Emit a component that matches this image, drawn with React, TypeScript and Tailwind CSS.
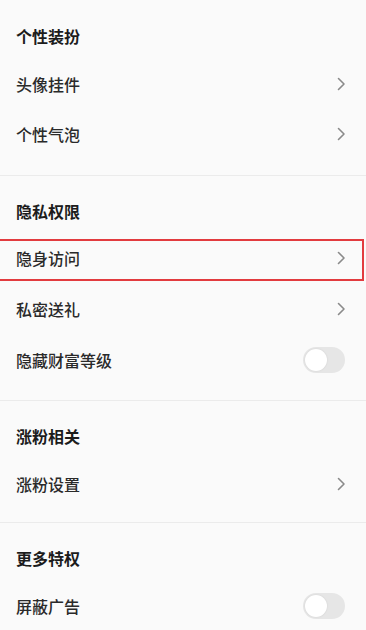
import React from "react";

const font = { fontFamily: '"Noto Sans CJK SC", "Noto Sans", sans-serif' };

function Chevron() {
  return (
    <svg width="10" height="14" viewBox="0 0 10 14" className="mr-[20px]">
      <path d="M2.5 1.5 L8 7 L2.5 12.5" fill="none" stroke="#8a8a8a" strokeWidth="1.6" strokeLinecap="round" strokeLinejoin="round" />
    </svg>
  );
}

function Toggle() {
  return (
    <div className="mr-[21px] flex h-[26px] w-[42px] items-center rounded-full bg-[#e6e6e6] px-[2px]">
      <div className="h-[22px] w-[22px] rounded-full bg-white shadow-[0_0_2px_rgba(0,0,0,0.1)]" />
    </div>
  );
}

function Header({ title }: { title: string }) {
  return (
    <div className="flex h-[46px] items-center pl-[16px] text-[16px] font-bold text-[#1c1c1c]">{title}</div>
  );
}

function Row({ label, toggle, highlight, tall }: { label: string; toggle?: boolean; highlight?: boolean; tall?: boolean }) {
  return (
    <div className={tall ? "relative flex h-[52px] items-center justify-between" : "relative flex h-[50px] items-center justify-between"}>
      <span className="pl-[16px] text-[16px] font-medium text-[#2a2a2a]">{label}</span>
      {toggle ? <Toggle /> : <Chevron />}
      {highlight && (
        <div className="pointer-events-none absolute left-[-3px] right-[2px] top-[6px] bottom-[2px] border-2 border-[#e23b3f]" />
      )}
    </div>
  );
}

export default function App() {
  return (
    <div className="h-[630px] w-[366px] overflow-hidden bg-[#fafafa]" style={font}>
      <div className="pt-[13px] pb-[16px]">
        <Header title="个性装扮" />
        <Row label="头像挂件" />
        <Row label="个性气泡" />
      </div>
      <div className="h-px bg-[#ebebeb]" />
      <div className="pt-[12px] pb-[15px]">
        <Header title="隐私权限" />
        <div className="-mt-[1px]">
          <Row label="隐身访问" highlight />
        </div>
        <Row label="私密送礼" tall />
        <Row label="隐藏财富等级" toggle />
      </div>
      <div className="h-px bg-[#ebebeb]" />
      <div className="pt-[12px] pb-[13px]">
        <Header title="涨粉相关" />
        <Row label="涨粉设置" />
      </div>
      <div className="h-px bg-[#ebebeb]" />
      <div className="pt-[12px]">
        <Header title="更多特权" />
        <Row label="屏蔽广告" toggle />
      </div>
    </div>
  );
}
